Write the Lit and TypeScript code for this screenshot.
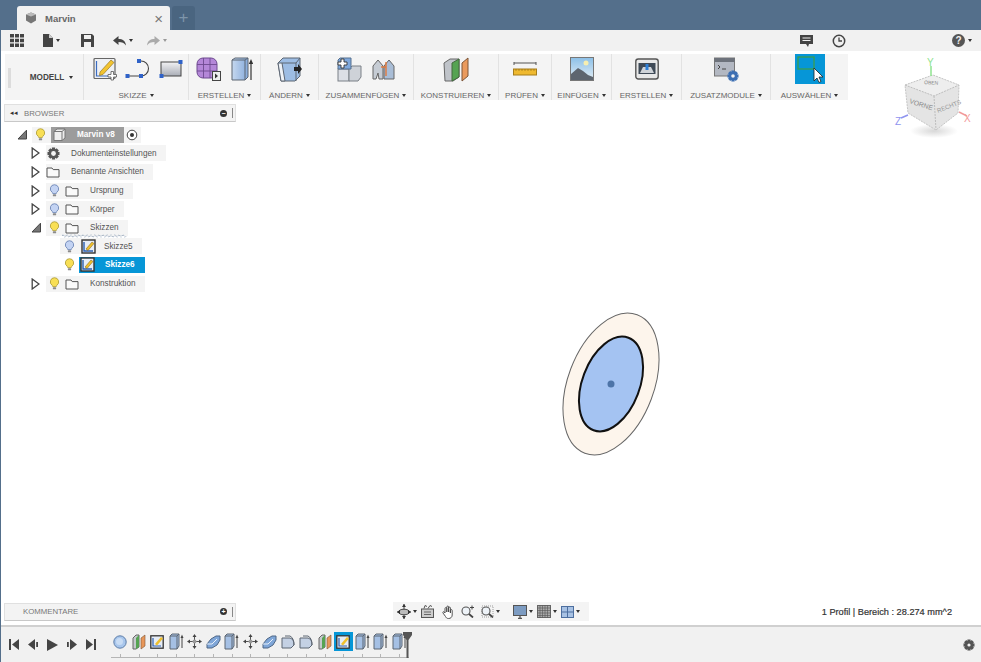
import { LitElement, html, css, svg } from 'lit';
import { customElement } from 'lit/decorators.js';

const ico = (w: number, h: number, body: unknown, vb?: string) => html`<svg
  width=${w}
  height=${h}
  viewBox=${vb || `0 0 ${w} ${h}`}
  style="display:block;flex:none"
>${body}</svg>`;

// --- small tree icons ---
const bulb = (on: boolean) =>
  ico(11, 13, svg`
    <path d="M6 .7a4.5 4.5 0 0 1 2.6 8.2c-.5.4-.7.9-.7 1.5H4.1c0-.6-.2-1.1-.7-1.5A4.5 4.5 0 0 1 6 .7z"
      fill=${on ? '#f8df55' : '#c3d3f3'} stroke=${on ? '#b5a33e' : '#7189b8'} />
    <rect x="4.2" y="11" width="3.6" height="2.4" rx=".8" fill="#8b8b8b" />`, '0 0 12 14');

const folder = ico(14, 12, svg`
  <path d="M1 2h5l1.2 1.6H13v7.4H1z" fill="#fafafa" stroke="#555" />`);

const gearBody = (c: string, r: number, size: number) => {
  const m = size / 2;
  return svg`
    ${[0, 45, 90, 135].map(
      (a) => svg`<rect x=${m - 1.6} y=".5" width="3.2" height=${size - 1} fill=${c} transform="rotate(${a} ${m} ${m})" />`
    )}
    <circle cx=${m} cy=${m} r=${r} fill="none" stroke=${c} stroke-width="2.4" />
    <circle cx=${m} cy=${m} r=${r - 1.2} fill="#f3f3f3" />`;
};
const gear = (size: number, c: string, r: number) => ico(size, size, gearBody(c, r, size));

const twistOpen = ico(10, 11, svg`<path d="M1 10L9.5 1.2V10z" fill="#777" stroke="#444" />`);
const twistShut = ico(9, 12, svg`<path d="M1.2 1L8 6 1.2 11z" fill="#fff" stroke="#444" stroke-width="1.3" />`);

const sketchMini = ico(15, 15, svg`
  <rect x="1" y="1" width="13" height="13" fill="#e8eef7" stroke="#333" stroke-width="1.4" />
  <path d="M3 3v9h9" fill="none" stroke="#2c5fb0" stroke-width="1.4" />
  <path d="M5 10l6-7 2 1.5-6 7z" fill="#f0c02c" stroke="#7a5b10" stroke-width=".5" />`);

const compCube = ico(13, 13, svg`
  <path d="M1 3.5L4 1h8v9l-3 2.5H1z" fill="#eee" stroke="#777" />
  <path d="M1 3.5h8v9M9 3.5L12 1" fill="none" stroke="#777" />`);

const radio = ico(12, 12, svg`
  <circle cx="6" cy="6" r="4.8" fill="#fff" stroke="#444" />
  <circle cx="6" cy="6" r="2" fill="#333" />`);

// --- ribbon icons ---
const sketchBig = ico(24, 24, svg`
  <rect x="1" y="1.5" width="21" height="20" rx="1" fill="#eef0f3" stroke="#666" stroke-width="1.2" />
  <path d="M3.5 4v15h14" fill="none" stroke="#3a6bc0" stroke-width="1.2" />
  <path d="M7 15L18 3l3 2.5-11 12-3.5 1z" fill="#f2c431" stroke="#8a6a14" stroke-width=".6" />
  <path d="M15 17.5h3v-3h2.5v3h3v2.5h-3v3H18v-3h-3z" fill="#fff" stroke="#555" stroke-width=".8" />`);
const spline = ico(26, 22, svg`
  <path d="M2 18h14a6.5 6.5 0 0 0 0-15h-3" fill="none" stroke="#444" stroke-width="1.1" />
  <rect x=".5" y="16" width="4" height="4" fill="#2f62c8" />
  <rect x="14" y="16" width="4" height="4" fill="#2f62c8" />
  <rect x="12" y="1" width="4" height="4" fill="#2f62c8" />`);
const rectTool = ico(24, 20, svg`
  <defs><linearGradient id="rg" x1="0" y1="0" x2="0" y2="1"><stop offset="0" stop-color="#f2f2f4"/><stop offset="1" stop-color="#a9adb6"/></linearGradient></defs>
  <rect x="2" y="3" width="20" height="14" fill="url(#rg)" stroke="#444" />
  <rect x=".5" y="15" width="4" height="4" fill="#2f62c8" />
  <rect x="19.5" y="1" width="4" height="4" fill="#2f62c8" />`);
const gridSolid = ico(25, 24, svg`
  <rect x="1" y="1" width="20" height="20" rx="6" fill="#b487d8" stroke="#6e4a90" />
  <path d="M1 7.5h20M1 14h20M7.5 1v20M14 1v20" stroke="#6e4a90" stroke-width=".9" />
  <rect x="16.5" y="14.5" width="8" height="9" fill="#eee" stroke="#444" />
  <path d="M19 16.5l3 2.5-3 2.5z" fill="#333" />`);
const extrudeBig = ico(22, 24, svg`
  <defs><linearGradient id="bb" x1="0" y1="0" x2="1" y2="0"><stop offset="0" stop-color="#c6d8ee"/><stop offset="1" stop-color="#86abdc"/></linearGradient></defs>
  <path d="M1 3L4 1H17V20L14 23H1z" fill="url(#bb)" stroke="#5d6673" />
  <path d="M1 3H14V23M14 3L17 1" fill="none" stroke="#5d6673" />
  <path d="M20 23V5" stroke="#333" stroke-width="1.2" />
  <path d="M17.8 7L20 2l2.2 5z" fill="#333" />`);
const changeBig = ico(25, 25, svg`
  <path d="M1 6L6 1h17v18l-5 5H4z" fill="#9dbde4" stroke="#5d6673" />
  <path d="M1 6h4l3 18H4z" fill="#eef2f7" stroke="#5d6673" />
  <path d="M5 6h14v18M19 6l4-5" fill="none" stroke="#5d6673" />
  <path d="M17 10h4V7l4 5-4 5v-3h-4z" fill="#222" />`);
const combineBig = ico(25, 25, svg`
  <rect x="1" y="12" width="11" height="12" fill="#dcdfe5" stroke="#7b8087" />
  <path d="M12 12l3-3h9v11l-3 4H12z" fill="#ced2d8" stroke="#7b8087" />
  <path d="M3 1h11v11H1V3z" fill="#7fa8dc" stroke="#56708f" />
  <path d="M4 2h3v3h3v3H7v3H4V8H1V5h3z" fill="#fff" stroke="#333" stroke-width=".9" />`);
const jointBig = ico(23, 23, svg`
  <path d="M1 21V8l5-6 5 6v13H7l-1-6-2 6z" fill="#c6ccd4" stroke="#666" />
  <path d="M12 21V8l5-6 5 6v13z" fill="#a9bdd6" stroke="#666" />
  <path d="M14 4v14" stroke="#e2793a" stroke-width="1.4" />
  <path d="M9 9h5" stroke="#e2793a" stroke-width="1.4" />`);
const planeBig = ico(26, 25, svg`
  <path d="M1 6l6-4h9v18l-6 4H2z" fill="#bfc3c9" stroke="#666" />
  <path d="M9 6l7-4v18l-7 4z" fill="#55a352" stroke="#44693f" />
  <path d="M19 6l6-5v18l-6 5z" fill="#ea9a5c" stroke="#7c5536" />`);
const ruler = ico(24, 14, svg`
  <path d="M1 1h22M1 0v3M23 0v3" stroke="#555" />
  <rect x=".5" y="7" width="23" height="6" fill="#efb92f" stroke="#a57d1b" />
  <path d="M3 7v2M6 7v2M9 7v2M12 7v2M15 7v2M18 7v2M21 7v2" stroke="#8a6a14" stroke-width=".6" />`);
const picture = ico(24, 24, svg`
  <defs><linearGradient id="sky" x1="0" y1="0" x2="0" y2="1"><stop offset="0" stop-color="#8cc0e8"/><stop offset="1" stop-color="#e4eef5"/></linearGradient></defs>
  <rect x=".5" y=".5" width="23" height="23" fill="url(#sky)" stroke="#777" />
  <circle cx="16" cy="6" r="2.5" fill="#f7eeb0" />
  <path d="M1 23v-6l7-6 5 3 5 4 5 2v3z" fill="#5d656f" />`);
const render3d = ico(24, 24, svg`
  <rect x=".8" y="2" width="22.4" height="20" rx="2.5" fill="#e8e8e8" stroke="#555" stroke-width="1.4" />
  <rect x="3.5" y="6" width="17" height="11" fill="#3f4a57" />
  <path d="M5 16l3-6h8l3 6z" fill="#cfd3d8" />
  <rect x="10.5" y="7" width="3" height="6" fill="#2f7fd6" />`);
const addin = ico(25, 25, svg`
  <rect x=".5" y="1" width="20" height="18" fill="#b3b8c2" stroke="#777" />
  <rect x=".5" y="1" width="20" height="4" fill="#6d727b" />
  <path d="M4 8l2 2-2 2M8 12h4" fill="none" stroke="#444" />
  <g transform="translate(13 13)">${gearBody('#3d6fb3', 3, 12)}</g>`);
const selectBig = html`<span class="selbox">${ico(30, 30, svg`
  <rect x="3" y="3" width="16" height="12" fill="none" stroke="#3f9f43" stroke-width="1.2" />
  <path d="M19 14v13l3-3 2 4.5 2-1-2-4.5h4z" fill="#fff" stroke="#222" stroke-width=".8" />`)}</span>`;

// --- quick access bar ---
const apps = ico(14, 13, svg`
  <path d="M0 0h4v3.6H0zM5 0h4v3.6H5zM10 0h4v3.6h-4zM0 4.7h4v3.6H0zM5 4.7h4v3.6H5zM10 4.7h4v3.6h-4zM0 9.4h4V13H0zM5 9.4h4V13H5zM10 9.4h4V13h-4z" fill="#444" />`);
const docIcon = ico(10, 13, svg`<path d="M0 0h6l4 4v9H0z" fill="#444" /><path d="M6 0v4h4" fill="#ccc" />`);
const save = ico(13, 13, svg`
  <path d="M0 0h11l2 2v11H0z" fill="#444" />
  <rect x="3" y="1" width="7" height="4" fill="#f0f0f0" />
  <rect x="3" y="8" width="7" height="5" fill="#f0f0f0" />`);
const arrowBack = (c: string) => ico(13, 10, svg`<path d="M0 4.5L5.5 0v3c4 0 7 1.5 7.5 6.5C11.5 7 9 6 5.5 6v3z" fill=${c} />`);
const arrowFwd = (c: string) => ico(13, 10, svg`<path d="M13 4.5L7.5 0v3C3.5 3 .5 4.5 0 9.5 1.5 7 4 6 7.5 6v3z" fill=${c} />`);
const comment = ico(13, 12, svg`
  <path d="M0 0h13v9H9l-1 3-2-3H0z" fill="#444" />
  <path d="M2.5 3h8M2.5 5.5h8" stroke="#f0f0f0" />`);
const clock = ico(14, 14, svg`
  <circle cx="7" cy="7" r="5.7" fill="none" stroke="#444" stroke-width="1.5" />
  <path d="M7 3.5V7h3" fill="none" stroke="#444" stroke-width="1.3" />`);

// --- nav bar ---
const orbit = ico(14, 15, svg`
  <path d="M7 0v15M0 8h14" stroke="#444" />
  <ellipse cx="7" cy="8" rx="5.5" ry="2.8" fill="#bbb" stroke="#444" />
  <path d="M7 0L5 3h4zM7 15l-2-3h4zM0 8l3-2v4zM14 8l-3-2v4z" fill="#333" />`);
const lookAt = ico(13, 13, svg`
  <rect x=".5" y="4" width="12" height="8.5" fill="#ccc" stroke="#555" />
  <path d="M3 7h7M3 9.5h7" stroke="#666" />
  <path d="M3 3.5l1-3 2 1M7 3.5l2-3 2 1" fill="none" stroke="#555" />`);
const hand = ico(12, 14, svg`
  <path d="M3 8V3.5a.9.9 0 0 1 1.8 0V7 2a.9.9 0 0 1 1.8 0v5-4a.9.9 0 0 1 1.8 0v5-2.5a.9.9 0 0 1 1.8 0V10c0 2-1.5 3.5-3.5 3.5S4.5 13 3.5 11.5L1 8c-.6-1 .6-1.8 1.3-1z" fill="#fff" stroke="#444" stroke-width=".9" />`);
const zoomIcon = (plus: boolean) => ico(13, 13, svg`
  <circle cx="5" cy="6" r="4" fill="#eef3f8" stroke="#555" stroke-width="1.1" />
  <path d="M8 9l4 3.5" stroke="#444" stroke-width="1.8" />
  ${plus ? svg`<path d="M9 2.5h4M11 .5v4" stroke="#444" />` : svg`<rect x="1" y="1" width="11" height="11" fill="none" stroke="#777" stroke-dasharray="1 1" stroke-width=".7"/>`}`);
const display = ico(14, 14, svg`
  <rect x=".5" y=".5" width="13" height="10" fill="#7d9cc2" stroke="#555" />
  <path d="M5 13.5h4M7 11v2" stroke="#555" stroke-width="1.3" />`);
const gridNav = ico(14, 13, svg`
  <rect x=".5" y=".5" width="13" height="12" fill="#aaa" stroke="#666" />
  <path d="M3 .5v12M5.5 .5v12M8 .5v12M10.5 .5v12M.5 3h13M.5 5.5h13M.5 8h13M.5 10.5h13" stroke="#555" stroke-width=".6" />`);
const viewports = ico(13, 12, svg`
  <rect x=".5" y=".5" width="12" height="11" fill="#a8c2e4" stroke="#4d6f9f" />
  <path d="M6.5 .5v11M.5 6h12" stroke="#4d6f9f" />`);

// --- timeline ---
const tlExtrude = ico(15, 17, svg`
  <path d="M1 3L3 1h7v12l-2 3H1z" fill="#a5c0e4" stroke="#5d6673" />
  <path d="M1 3h7v13M8 3l2-2" fill="none" stroke="#5d6673" />
  <path d="M13 15V4" stroke="#444" /><path d="M11.5 5L13 1.5 14.5 5z" fill="#444" />`);
const tlMove = ico(15, 15, svg`
  <path d="M7.5 1v13M1 7.5h13" stroke="#555" />
  <circle cx="7.5" cy="7.5" r="2" fill="#999" />
  <path d="M7.5 0L5.5 3h4zM7.5 15l-2-3h4zM0 7.5l3-2v4zM15 7.5l-3-2v4z" fill="#444" />`);
const tlOrigin = ico(14, 14, svg`
  <circle cx="7" cy="7" r="6.2" fill="#a8c6ec" stroke="#5e7ea8" />
  <circle cx="6.5" cy="6.5" r="3.5" fill="#c8dcf4" />`);
const tlPlane = ico(14, 16, svg`
  <path d="M1 4l3-3h3v12l-3 2H1z" fill="#c6c9ce" stroke="#666" />
  <path d="M4 4l3-3v12l-3 2z" fill="#56a453" />
  <path d="M9 4l4-3v11l-4 3z" fill="#e8975a" stroke="#7c5536" stroke-width=".6" />`);
const tlSketch = ico(14, 14, svg`
  <rect x=".8" y=".8" width="12.4" height="12.4" fill="#e6ecf5" stroke="#333" stroke-width="1.3" />
  <path d="M3 3v8h8" fill="none" stroke="#2c5fb0" stroke-width="1.2" />
  <path d="M5 9l6-7 2 1.5-6 7z" fill="#f0c02c" />`);
const tlFillet = ico(14, 14, svg`
  <path d="M1 3h8q4 1 4 7l-3 3H1z" fill="#c4d1e4" stroke="#5d6673" />
  <path d="M4 1h5q4 2 4 9" fill="none" stroke="#5d6673" />`);
const tlChamfer = ico(15, 14, svg`
  <path d="M1 9l4-5 5-3h4v4l-3 5-5 3H1z" fill="#7fa6d8" stroke="#4f6786" />
  <path d="M1 9h5l5-5" fill="none" stroke="#e8f0fa" />`);

const timeline = [
  tlOrigin, tlPlane, tlSketch, tlExtrude, tlMove, tlChamfer, tlExtrude, tlMove,
  tlChamfer, tlFillet, tlFillet, tlPlane, tlSketch, tlExtrude, tlExtrude, tlExtrude,
];

const groups = [
  { label: 'SKIZZE', w: 105, tight: true, items: [sketchBig, spline, rectTool] },
  { label: 'ERSTELLEN', w: 72, items: [gridSolid, extrudeBig] },
  { label: 'ÄNDERN', w: 58, items: [changeBig] },
  { label: 'ZUSAMMENFÜGEN', w: 95, items: [combineBig, jointBig] },
  { label: 'KONSTRUIEREN', w: 85, items: [planeBig] },
  { label: 'PRÜFEN', w: 53, items: [ruler] },
  { label: 'EINFÜGEN', w: 60, items: [picture] },
  { label: 'ERSTELLEN', w: 70, items: [render3d] },
  { label: 'ZUSATZMODULE', w: 89, items: [addin] },
  { label: 'AUSWÄHLEN', w: 77, items: [selectBig] },
];

type Row = { level: number; open?: boolean; eye?: 'on' | 'off'; icon: unknown; text: string; wavy?: boolean };

const rows: Row[] = [
  { level: 1, icon: gear(13, '#555', 3.6), text: 'Dokumenteinstellungen' },
  { level: 1, icon: folder, text: 'Benannte Ansichten' },
  { level: 1, eye: 'off', icon: folder, text: 'Ursprung' },
  { level: 1, eye: 'off', icon: folder, text: 'Körper' },
  { level: 1, open: true, eye: 'on', icon: folder, text: 'Skizzen', wavy: true },
];

// the dotted squiggle that marks a dirty node in the tree
const squiggle = svg`<path
  d="M0 2${Array.from({ length: 16 }, () => 'q1 -2.5 2 0t2 0').join('')}"
  fill="none" stroke="#7f93ad" stroke-dasharray="1 1" />`;

@customElement('app-root')
export class AppRoot extends LitElement {
  static styles = css`
    :host {
      display: flex;
      flex-direction: column;
      position: relative;
      box-sizing: border-box;
      width: 981px;
      height: 662px;
      overflow: hidden;
      background: #fff;
      border-left: 1px solid #546f8b;
      font-family: 'Liberation Sans', Arial, sans-serif;
      color: #555;
    }
    .tabs {
      display: flex;
      align-items: flex-end;
      gap: 2px;
      height: 30px;
      padding-left: 16px;
      background: #546f8b;
      flex: none;
    }
    .tab {
      display: flex;
      align-items: center;
      box-sizing: border-box;
      width: 153px;
      height: 24px;
      padding: 0 7px 0 8px;
      background: #f1f1f1;
      border-radius: 3px 3px 0 0;
      font-size: 9.5px;
      font-weight: bold;
      color: #666;
    }
    .tab .name {
      margin-left: 8px;
      flex: 1;
    }
    .tab .x {
      font-size: 15px;
      font-weight: normal;
      color: #777;
    }
    .newtab {
      width: 23px;
      height: 24px;
      background: #4a6580;
      border-radius: 3px 3px 0 0;
      color: #7e95aa;
      font-size: 17px;
      line-height: 24px;
      text-align: center;
    }
    .qbar {
      display: flex;
      align-items: center;
      flex: none;
      height: 21px;
      background: #f1f1f1;
      padding-left: 9px;
    }
    .qbar .c {
      display: flex;
      align-items: center;
    }
    .qbar .spring {
      flex: 1;
    }
    .qbar .doc { margin-left: 19px; }
    .qbar .sv { margin-left: 21px; }
    .qbar .undo { margin-left: 19px; }
    .qbar .redo { margin-left: 14px; }
    .qbar .clk { margin-left: 19px; }
    .qbar .hlp { margin: 0 9px 0 106px; }
    .help {
      width: 13px;
      height: 13px;
      border-radius: 50%;
      background: #555;
      color: #f1f1f1;
      font-size: 10px;
      font-weight: bold;
      line-height: 13px;
      text-align: center;
    }
    .car {
      display: inline-block;
      width: 0;
      height: 0;
      margin-left: 3px;
      border: 2.5px solid transparent;
      border-top: 3px solid #333;
      border-bottom: 0;
      vertical-align: middle;
      flex: none;
    }
    .car.dim {
      border-top-color: #999;
    }
    .ribbon {
      display: flex;
      flex: none;
      box-sizing: border-box;
      width: 843px;
      height: 46px;
      margin: 3px 0 0 4px;
      background: #f4f4f4;
    }
    .grip {
      width: 3px;
      height: 20px;
      margin: 14px 0 0 3px;
      background: #dcdcdc;
      flex: none;
    }
    .modell {
      display: flex;
      align-items: center;
      justify-content: center;
      box-sizing: border-box;
      width: 73px;
      padding-left: 9px;
      font-size: 8.2px;
      font-weight: bold;
      color: #444;
      border-right: 1px solid #e2e2e2;
    }
    .modell .car {
      margin-left: 5px;
    }
    .grp {
      display: flex;
      flex-direction: column;
      align-items: center;
      box-sizing: border-box;
      height: 46px;
      border-right: 1px solid #e2e2e2;
      flex: none;
    }
    .grp:last-child {
      border-right: 0;
    }
    .grp .items {
      display: flex;
      align-items: center;
      justify-content: center;
      gap: 10px;
      height: 30px;
      margin-bottom: 7px;
    }
    .grp.tight .items {
      gap: 8px;
      padding-left: 4px;
    }
    .grp .lbl {
      font-size: 8px;
      line-height: 9px;
      color: #666;
      white-space: nowrap;
    }
    .selbox {
      display: block;
      width: 30px;
      height: 30px;
      background: #0696d7;
    }
    .stage {
      flex: 1;
      position: relative;
      display: flex;
      flex-direction: column;
      justify-content: space-between;
      padding: 4px 0 4px 3px;
      min-height: 0;
    }
    .panel {
      display: flex;
      align-items: center;
      box-sizing: border-box;
      width: 232px;
      height: 18px;
      padding: 0 2px 0 5px;
      background: #f3f3f3;
      border: 1px solid #e0e0e0;
      border-bottom: 1px solid #c8c8c8;
      font-size: 7.8px;
      color: #777;
    }
    .panel .arrows {
      font-size: 7px;
      color: #333;
    }
    .panel .title {
      flex: 1;
      margin-left: 6px;
    }
    .panel.low .title {
      margin-left: 13px;
    }
    .panel .pin {
      width: 1px;
      height: 10px;
      margin-left: 5px;
      background: #888;
    }
    .dot {
      width: 7px;
      height: 7px;
      border-radius: 50%;
      background: #333;
      color: #fff;
      font-size: 7px;
      line-height: 7px;
      text-align: center;
      font-weight: bold;
    }
    .tree {
      padding-top: 3.5px;
      font-size: 8.2px;
    }
    .row {
      display: flex;
      align-items: center;
      height: 18.6px;
    }
    .twist {
      display: flex;
      align-items: center;
      width: 15px;
      flex: none;
    }
    .chip {
      position: relative;
      display: flex;
      align-items: center;
      height: 16px;
      background: #f4f4f4;
      padding-right: 9px;
      white-space: nowrap;
    }
    .eye {
      display: flex;
      justify-content: center;
      width: 16px;
      flex: none;
    }
    .icon {
      display: flex;
      justify-content: center;
      width: 19px;
      flex: none;
    }
    .text {
      margin-left: 9px;
    }
    .noeye .icon {
      width: 14px;
    }
    .noeye .text {
      margin-left: 11px;
    }
    .squiggle {
      position: absolute;
      left: 16px;
      bottom: -2px;
    }
    .wide .eye {
      width: 19px;
    }
    .wide .text {
      margin-left: 6px;
    }
    .root {
      padding-right: 3px;
    }
    .sel {
      display: flex;
      align-items: center;
      height: 16px;
    }
    .root .sel {
      width: 73px;
      background: #9c9c9c;
      color: #fff;
      font-weight: bold;
      margin-right: 2px;
    }
    .root .eye {
      width: 16px;
      margin-right: 3px;
    }
    .root .sel .icon {
      width: 16px;
    }
    .root .sel .text {
      margin-left: 10px;
    }
    .active {
      background: transparent;
      padding: 0;
    }
    .active .eye {
      width: 19px;
    }
    .active .sel {
      width: 66px;
      background: #0696d7;
      color: #fff;
      font-weight: bold;
    }
    .active .sel .icon {
      width: 16px;
    }
    .active .sel .text {
      margin-left: 10px;
    }
    .foot {
      display: flex;
      align-items: center;
    }
    .nav {
      display: flex;
      align-items: center;
      box-sizing: border-box;
      width: 196px;
      height: 19px;
      margin-left: 157px;
      padding-left: 4px;
      background: #f4f4f4;
    }
    .nav .car {
      margin-left: 2px;
    }
    .g4 { margin-left: 4px; }
    .g7 { margin-left: 7px; }
    .g8 { margin-left: 8px; }
    .g13 { margin-left: 13px; }
    .status {
      margin-left: auto;
      margin-right: 29px;
      font-size: 9.2px;
      color: #333;
      -webkit-text-stroke: 0.2px #333;
      white-space: nowrap;
    }
    .shape {
      position: absolute;
      left: 559px;
      top: 210px;
    }
    .cube {
      position: absolute;
      left: 889px;
      top: 55px;
    }
    .timeline {
      display: flex;
      align-items: center;
      position: relative;
      flex: none;
      box-sizing: border-box;
      height: 37px;
      padding-left: 8px;
      background: #f1f1f1;
      border-top: 2px solid #d0d0d0;
    }
    .play {
      display: flex;
      align-items: center;
      gap: 9px;
    }
    .track {
      display: flex;
      margin: 1px 0 0 15px;
      border-bottom: 1px solid #b5b5b5;
      height: 25px;
    }
    .step {
      position: relative;
      display: flex;
      justify-content: center;
      align-items: center;
      width: 18.6px;
      height: 19px;
    }
    .step::after {
      content: '';
      position: absolute;
      left: 9px;
      bottom: -6px;
      width: 1px;
      height: 3px;
      background: #b5b5b5;
    }
    .step.on {
      background: #0696d7;
    }
    .marker {
      position: absolute;
      left: 402px;
      top: 5px;
    }
    .cfg {
      margin-left: auto;
      margin-right: 6px;
    }
  `;

  renderRow(r: Row) {
    return html`<div class="row" style="padding-left:${13 + r.level * 14}px">
      <span class="twist">${r.open ? twistOpen : twistShut}</span>
      <span class="chip ${r.eye ? '' : 'noeye'}">
        ${r.eye ? html`<span class="eye">${bulb(r.eye === 'on')}</span>` : ''}
        <span class="icon">${r.icon}</span>
        <span class="text">${r.text}</span>
        ${r.wavy ? html`<svg class="squiggle" width="66" height="4" viewBox="0 0 66 4">${squiggle}</svg>` : ''}
      </span>
    </div>`;
  }

  render() {
    return html`
      <div class="tabs">
        <div class="tab">
          ${ico(12, 12, svg`<path d="M1 2.5L6 .5l5 2v6L6 11.5 1 8.5z" fill="#777" /><path d="M1 2.5l5 2 5-2L6 .5z" fill="#bbb" />`)}
          <span class="name">Marvin</span>
          <span class="x">×</span>
        </div>
        <div class="newtab">+</div>
      </div>
      <div class="qbar">
        ${apps}
        <span class="c doc">${docIcon}<i class="car"></i></span>
        <span class="c sv">${save}</span>
        <span class="c undo">${arrowBack('#444')}<i class="car"></i></span>
        <span class="c redo">${arrowFwd('#aaa')}<i class="car dim"></i></span>
        <span class="spring"></span>
        ${comment}
        <span class="c clk">${clock}</span>
        <span class="c hlp"><span class="help">?</span><i class="car"></i></span>
      </div>
      <div class="ribbon">
        <span class="grip"></span>
        <div class="modell">MODELL <i class="car"></i></div>
        ${groups.map(
          (g) => html`<div class="grp ${g.tight ? 'tight' : ''}" style="width:${g.w}px">
            <div class="items">${g.items}</div>
            <div class="lbl">${g.label}<i class="car"></i></div>
          </div>`
        )}
      </div>
      <div class="stage">
        <div>
          <div class="panel">
            <span class="arrows">◂◂</span>
            <span class="title">BROWSER</span>
            <span class="dot">−</span><span class="pin"></span>
          </div>
          <div class="tree">
            <div class="row" style="padding-left:13px">
              <span class="twist">${twistOpen}</span>
              <span class="chip root">
                <span class="eye">${bulb(true)}</span>
                <span class="sel"><span class="icon">${compCube}</span><span class="text">Marvin v8</span></span>
                ${radio}
              </span>
            </div>
            ${rows.map((r) => this.renderRow(r))}
            <div class="row" style="padding-left:56px">
              <span class="chip wide">
                <span class="eye">${bulb(false)}</span>
                <span class="icon">${sketchMini}</span>
                <span class="text">Skizze5</span>
              </span>
            </div>
            <div class="row" style="padding-left:56px">
              <span class="chip active">
                <span class="eye">${bulb(true)}</span>
                <span class="sel"><span class="icon">${sketchMini}</span><span class="text">Skizze6</span></span>
              </span>
            </div>
            ${this.renderRow({ level: 1, eye: 'on', icon: folder, text: 'Konstruktion' })}
          </div>
        </div>
        <div class="foot">
          <div class="panel low">
            <span class="title">KOMMENTARE</span>
            <span class="dot">+</span><span class="pin"></span>
          </div>
          <div class="nav">
            ${orbit}<i class="car"></i>
            <span class="g4">${lookAt}</span>
            <span class="g8">${hand}</span>
            <span class="g7">${zoomIcon(true)}</span>
            <span class="g7">${zoomIcon(false)}</span><i class="car"></i>
            <span class="g13">${display}</span><i class="car"></i>
            <span class="g4">${gridNav}</span><i class="car"></i>
            <span class="g4">${viewports}</span><i class="car"></i>
          </div>
          <div class="status">1 Profil | Bereich : 28.274 mm^2</div>
        </div>
        <svg class="shape" width="104" height="148" viewBox="0 0 104 148">
          <g transform="translate(51 74) rotate(20.7)">
            <ellipse rx="43" ry="74" fill="#fdf5ec" stroke="#666" />
            <ellipse rx="28.7" ry="49.4" fill="#a4c3f2" stroke="#111" stroke-width="2" />
          </g>
          <circle cx="51" cy="74" r="3.5" fill="#4d74a8" />
        </svg>
      </div>
      <div class="timeline">
        <div class="play">
          ${ico(10, 11, svg`<path d="M0 0h2v11H0zM10 0v11L3 5.5z" fill="#444" />`)}
          ${ico(10, 11, svg`<path d="M7 0v11L0 5.5zM8.2 3h1.8v5H8.2z" fill="#444" />`)}
          ${ico(11, 12, svg`<path d="M0 0l11 6-11 6z" fill="#444" />`)}
          ${ico(10, 11, svg`<path d="M3 0v11l7-5.5zM0 3h1.8v5H0z" fill="#444" />`)}
          ${ico(10, 11, svg`<path d="M8 0h2v11H8zM0 0v11l7-5.5z" fill="#444" />`)}
        </div>
        <div class="track">
          ${timeline.map((t, i) => html`<span class="step ${i === 12 ? 'on' : ''}">${t}</span>`)}
        </div>
        <span class="marker">${ico(9, 26, svg`
          <path d="M0 0h9v3L5.5 8V26h-2V8L0 3z" fill="#555" />`)}</span>
        <span class="cfg">${gear(12, '#555', 2.8)}</span>
      </div>
      <svg class="cube" width="86" height="86" viewBox="889 55 86 86">
        <defs>
          <radialGradient id="sh"><stop offset="0" stop-color="#d8d8d8" /><stop offset="1" stop-color="#fff" /></radialGradient>
        </defs>
        <ellipse cx="933" cy="131" rx="24" ry="7" fill="url(#sh)" />
        <path d="M904 85L932 75 958 85 957 113 935 130 907 113z" fill="#e4e4e4" />
        <path d="M904 85L932 75 958 85 933 96z" fill="#eeeeee" />
        <path d="M904 85L933 96 958 85M933 96L935 130" fill="none" stroke="#bdbdbd" stroke-dasharray="2 1" />
        <path d="M904 85L932 75 958 85 957 113 935 130 907 113z" fill="none" stroke="#c4c4c4" stroke-dasharray="2 1" />
        <text transform="translate(908 103) rotate(18)" font-size="6.8" font-family="Liberation Sans" fill="#888">VORNE</text>
        <text transform="translate(937 113) rotate(-22)" font-size="6.2" font-family="Liberation Sans" fill="#999">RECHTS</text>
        <text transform="translate(923 84) rotate(3)" font-size="5" font-family="Liberation Sans" fill="#888">OBEN</text>
        <path d="M930 76V66" stroke="#8fe38f" stroke-width="1.5" />
        <path d="M958 112l8 4" stroke="#f29a9a" stroke-width="1.5" />
        <path d="M907 115l-7 3" stroke="#8f94ef" stroke-width="1.5" />
        <text x="926" y="66" font-size="10" font-family="Liberation Sans" fill="#8fe38f">Y</text>
        <text x="963" y="122" font-size="10" font-family="Liberation Sans" fill="#f29a9a">X</text>
        <text x="894" y="125" font-size="10" font-family="Liberation Sans" fill="#8f94ef">Z</text>
      </svg>
    `;
  }
}
